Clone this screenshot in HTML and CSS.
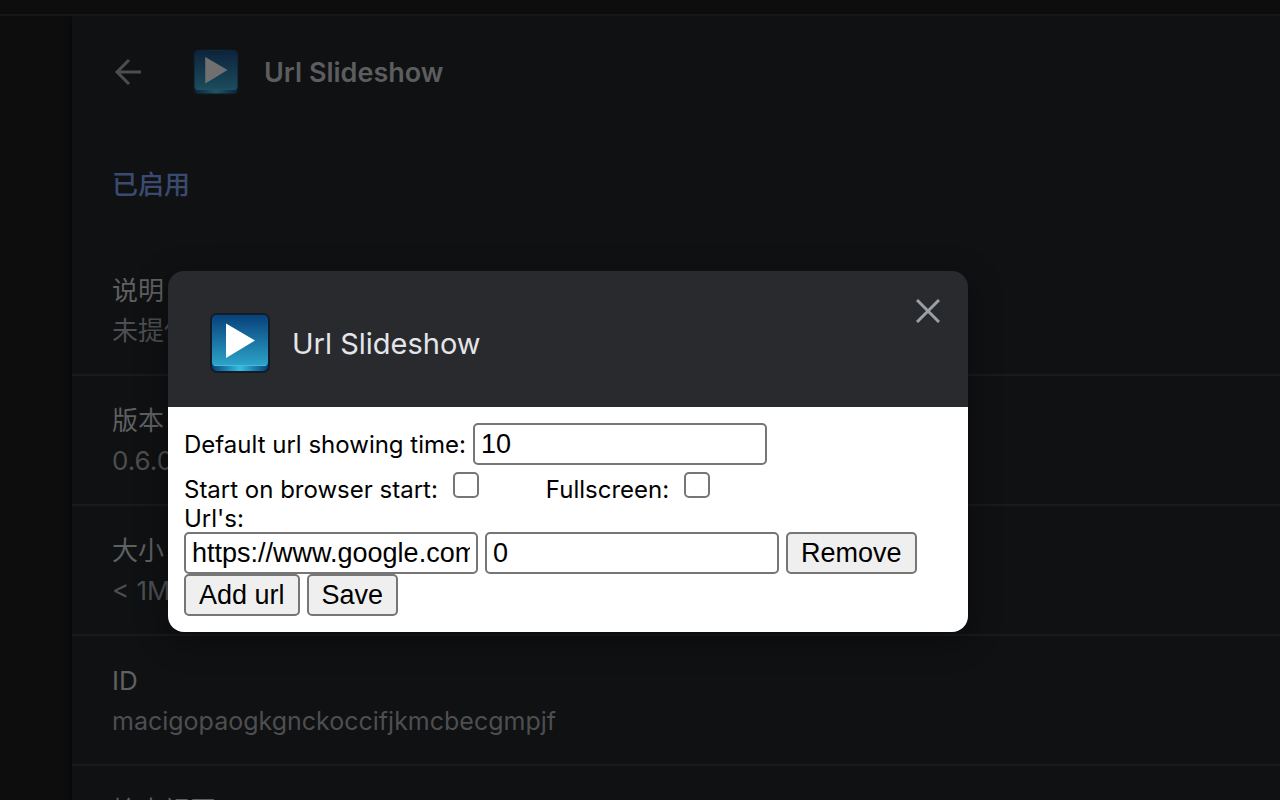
FILE: index.html
```
<!DOCTYPE html>
<html lang="zh-CN">
<head>
    <meta charset="UTF-8">
    <meta content="width=device-width, initial-scale=1.0" name="viewport">
    <title>Url Slideshow</title>
    <link rel="stylesheet" href="styles.css">
</head>
<body>
<svg class="symbols" aria-hidden="true">
    <defs>
        <linearGradient id="face" x1="0" y1="0" x2="0" y2="1">
            <stop offset="0" stop-color="#08407a"/>
            <stop offset="1" stop-color="#2da5cb"/>
        </linearGradient>
        <linearGradient id="lip" x1="0" y1="0" x2="1" y2="0">
            <stop offset="0" stop-color="#06407c"/>
            <stop offset="0.5" stop-color="#35bfe2"/>
            <stop offset="1" stop-color="#06407c"/>
        </linearGradient>
        <symbol id="play" viewBox="0 0 60 60">
            <rect x="0" y="0" width="60" height="60" rx="7" fill="#111c24"/>
            <rect x="2" y="2" width="56" height="56" rx="5" fill="url(#lip)"/>
            <path d="M7 2h46a5 5 0 0 1 5 5v42a4 4 0 0 1-4 4H6a4 4 0 0 1-4-4V7a5 5 0 0 1 5-5z" fill="url(#face)"/>
            <path d="M4 52.500h52" stroke="#4cb9d8" stroke-width="1"/>
            <path d="M16 10.500v34.500l29-17.500z" fill="#fff"/>
        </symbol>
    </defs>
</svg>

<div class="toolbar"></div>
<main class="card">
    <header class="card-header">
        <button class="icon-button" type="button" aria-label="返回">
            <svg width="28" height="28" viewBox="0 0 28 28"><path d="M27 14H3M15 2L3 14l12 12" fill="none" stroke="#4c4d4f" stroke-width="3"/></svg>
        </button>
        <svg class="header-logo" width="46" height="46"><use href="#play"/></svg>
        <h1>Url Slideshow</h1>
    </header>
    <div class="status">已启用</div>
    <section class="row">
        <div class="label">说明</div>
        <div class="value">未提供任何说明</div>
    </section>
    <section class="row">
        <div class="label">版本</div>
        <div class="value">0.6.0</div>
    </section>
    <section class="row">
        <div class="label">大小</div>
        <div class="value">&lt; 1MB</div>
    </section>
    <section class="row">
        <div class="label">ID</div>
        <div class="value id">macigopaogkgnckoccifjkmcbecgmpjf</div>
    </section>
    <section class="row">
        <div class="label">检查视图</div>
    </section>
</main>

<div class="dialog" role="dialog" aria-labelledby="dialogTitle">
    <div class="dialog-header">
        <svg width="60" height="60"><use href="#play"/></svg>
        <h2 id="dialogTitle">Url Slideshow</h2>
        <button class="icon-button close" type="button" aria-label="关闭">
            <svg width="24" height="24" viewBox="0 0 24 24"><path d="M1 1l22 22M23 1L1 23" stroke="#9aa0a6" stroke-width="3"/></svg>
        </button>
    </div>
    <form class="options">
        <div class="line">
            <label for="time">Default url showing time:</label>
            <input id="time" type="text" value="10">
        </div>
        <div class="line checks">
            <label for="start">Start on browser start:</label>
            <input id="start" type="checkbox">
            <label class="second" for="fullscreen">Fullscreen:</label>
            <input id="fullscreen" type="checkbox">
        </div>
        <div class="urls-title">Url's:</div>
        <div class="line">
            <input type="text" value="https://www.google.com/" aria-label="Url">
            <input type="text" value="0" aria-label="Time">
            <button type="button">Remove</button>
        </div>
        <div class="line">
            <button type="button">Add url</button>
            <button type="button">Save</button>
        </div>
    </form>
</div>
</body>
</html>
```
FILE: styles.css
```
* {
    box-sizing: border-box;
}
body {
    margin: 0;
    height: 100vh;
    overflow: hidden;
    background-color: #0d0d0d;
    font-family: Inter, "Noto Sans CJK SC", sans-serif;
    font-size: 26px;
}
h1, h2 {
    margin: 0;
}
.symbols {
    position: absolute;
    width: 0;
    height: 0;
}
.toolbar {
    position: relative;
    z-index: 1;
    height: 16px;
    border-bottom: 2px solid #171718;
    background-color: #0d0d0d;
}

/* dimmed extension details behind the dialog */
.card {
    margin-left: 72px;
    background-color: #101113;
    box-shadow: 0 0 6px rgba(0, 0, 0, 0.6);
}
.card-header {
    display: flex;
    align-items: center;
    height: 112px;
    padding-left: 42px;
}
.icon-button {
    display: flex;
    padding: 0;
    border: none;
    background: none;
    cursor: pointer;
}
.header-logo {
    margin: 0 25px 0 51px;
    opacity: 0.4;
}
h1 {
    font-size: 27px;
    font-weight: 600;
    color: #5c5d5e;
}
.status {
    padding: 37px 40px 41px;
    line-height: 40px;
    font-weight: 500;
    color: #3b4b70;
}
.row {
    height: 130px;
    padding: 25px 40px 23px;
    border-bottom: 2px solid #191a1c;
    line-height: 40px;
}
.label {
    color: #5f6061;
}
.value {
    color: #4d4e50;
}
.id {
    font-size: 25px;
}

.dialog {
    position: absolute;
    z-index: 2;
    top: 271px;
    left: 168px;
    width: 800px;
    border-radius: 16px;
    overflow: hidden;
    box-shadow: 0 8px 32px rgba(0, 0, 0, 0.4);
}
.dialog-header {
    display: flex;
    align-items: center;
    gap: 22px;
    height: 136px;
    padding: 8px 28px 0 42px;
    background-color: #292a2d;
}
h2 {
    font-size: 29px;
    font-weight: 400;
    color: #e4e5e8;
}
.close {
    align-self: flex-start;
    margin: 20px 0 0 auto;
}
.options {
    padding: 16px;
    background-color: #fff;
    font-size: 24px;
    line-height: 29px;
    color: #000;
}
.line {
    display: flex;
    align-items: center;
    gap: 7px;
}
.checks {
    height: 39px;
    align-items: flex-end;
}
.second {
    margin-left: 52px;
}
.urls-title {
    height: 28px;
}
.options input[type="text"] {
    width: 294px;
    height: 42px;
    padding: 2px 6px;
    border: 2px solid #767676;
    border-radius: 5px;
    background-color: #fff;
    font: 27px "Liberation Sans", Arial, sans-serif;
    color: #000;
}
.options input[type="checkbox"] {
    appearance: none;
    width: 26px;
    height: 26px;
    margin: 0 8px 6px;
    border: 2px solid #767676;
    border-radius: 5px;
    background-color: #fff;
}
.options button {
    height: 42px;
    padding: 0 13px;
    border: 2px solid #767676;
    border-radius: 5px;
    background-color: #efefef;
    font: 27px "Liberation Sans", Arial, sans-serif;
    color: #000;
}
```
